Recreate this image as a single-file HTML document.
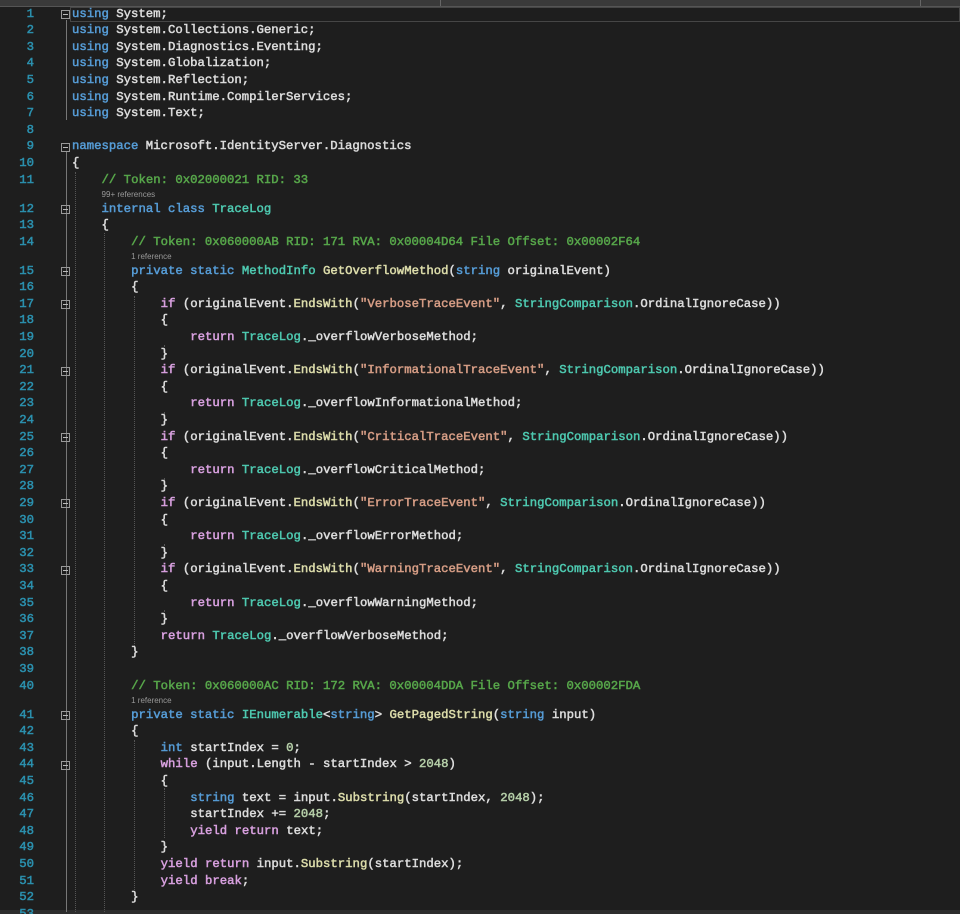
<!DOCTYPE html>
<html><head><meta charset="utf-8"><style>
html,body{margin:0;padding:0;background:#1e1e1e;width:960px;height:914px;overflow:hidden;position:relative}
.l{position:absolute;left:0;height:17px;line-height:17px;white-space:pre;font-family:"Liberation Mono",monospace;font-size:12.3px;color:#dcdcdc;-webkit-text-stroke:0.5px}
.n{position:absolute;width:34px;text-align:right;color:#2b91af;left:0}
.x{position:absolute}
.k{color:#569cd6}.c{color:#d8a0df}.t{color:#4ec9b0}.m{color:#dcdcaa}.s{color:#d69d85}.g{color:#57a64a}.u{color:#b5cea8}
.lens{position:absolute;font-family:"Liberation Sans",sans-serif;font-size:8px;color:#999;height:10px;line-height:10px}
.fold{position:absolute;left:61px;width:7px;height:7px;border:1px solid #999;box-sizing:content-box}
.fold:after{content:"";position:absolute;left:1px;right:1px;top:3px;height:1px;background:#bbb}
.vg{position:absolute;width:0;border-left:1px dotted #555}
</style></head><body>
<div style="position:absolute;left:0;top:0;width:960px;height:6px;background:#3a3a3a;border-bottom:1px solid #555"></div>
<div style="position:absolute;left:440px;top:0;width:1px;height:6px;background:#666"></div>
<div style="position:absolute;left:920px;top:0;width:1px;height:6px;background:#666"></div>
<div style="position:absolute;left:70px;top:7px;width:888px;height:13px;border:1px solid #464646"></div>
<div style="position:absolute;left:0;top:910px;width:960px;height:4px;background:#2d2d2d"></div>
<div style="position:absolute;left:66px;top:20px;width:1px;height:100px;background:#777"></div>
<div style="position:absolute;left:66px;top:152px;width:1px;height:760px;background:#777"></div>
<div class="vg" style="left:75px;top:172px;height:740px"></div>
<div class="vg" style="left:104px;top:233px;height:679px"></div>
<div class="vg" style="left:134px;top:296px;height:350px"></div>
<div class="vg" style="left:134px;top:740px;height:150px"></div>
<div class="vg" style="left:164px;top:345px;height:10px"></div>
<div class="vg" style="left:164px;top:412px;height:10px"></div>
<div class="vg" style="left:164px;top:478px;height:10px"></div>
<div class="vg" style="left:164px;top:544px;height:10px"></div>
<div class="vg" style="left:164px;top:610px;height:10px"></div>
<div class="vg" style="left:164px;top:788px;height:50px"></div>
<div id="c"></div>
<script>
var L=[
[0,"<span class=k>using</span> System;",1],
[0,"<span class=k>using</span> System.Collections.Generic;"],
[0,"<span class=k>using</span> System.Diagnostics.Eventing;"],
[0,"<span class=k>using</span> System.Globalization;"],
[0,"<span class=k>using</span> System.Reflection;"],
[0,"<span class=k>using</span> System.Runtime.CompilerServices;"],
[0,"<span class=k>using</span> System.Text;"],
[0,""],
[0,"<span class=k>namespace</span> Microsoft.IdentityServer.Diagnostics",1],
[0,"{"],
[1,"<span class=g>// Token: 0x02000021 RID: 33</span>"],
[1,"<span class=k>internal</span> <span class=k>class</span> <span class=t>TraceLog</span>",1,"99+ references"],
[1,"{"],
[2,"<span class=g>// Token: 0x060000AB RID: 171 RVA: 0x00004D64 File Offset: 0x00002F64</span>"],
[2,"<span class=k>private</span> <span class=k>static</span> <span class=t>MethodInfo</span> <span class=m>GetOverflowMethod</span>(<span class=k>string</span> originalEvent)",1,"1 reference"],
[2,"{"]
];
var ev=["Verbose","Informational","Critical","Error","Warning"];
ev.forEach(function(e){
L.push([3,"<span class=c>if</span> (originalEvent.<span class=m>EndsWith</span>(<span class=s>\""+e+"TraceEvent\"</span>, <span class=t>StringComparison</span>.OrdinalIgnoreCase))",1]);
L.push([3,"{"]);
L.push([4,"<span class=c>return</span> <span class=t>TraceLog</span>._overflow"+e+"Method;"]);
L.push([3,"}"]);
});
L=L.concat([
[3,"<span class=c>return</span> <span class=t>TraceLog</span>._overflowVerboseMethod;"],
[2,"}"],
[0,""],
[2,"<span class=g>// Token: 0x060000AC RID: 172 RVA: 0x00004DDA File Offset: 0x00002FDA</span>"],
[2,"<span class=k>private</span> <span class=k>static</span> <span class=t>IEnumerable</span>&lt;<span class=k>string</span>&gt; <span class=m>GetPagedString</span>(<span class=k>string</span> input)",1,"1 reference"],
[2,"{"],
[3,"<span class=k>int</span> startIndex = <span class=u>0</span>;"],
[3,"<span class=c>while</span> (input.Length - startIndex &gt; <span class=u>2048</span>)",1],
[3,"{"],
[4,"<span class=k>string</span> text = input.<span class=m>Substring</span>(startIndex, <span class=u>2048</span>);"],
[4,"startIndex += <span class=u>2048</span>;"],
[4,"<span class=c>yield</span> <span class=c>return</span> text;"],
[3,"}"],
[3,"<span class=c>yield</span> <span class=c>return</span> input.<span class=m>Substring</span>(startIndex);"],
[3,"<span class=c>yield</span> <span class=c>break</span>;"],
[2,"}"],
[0,""]
]);
var h="",W=7.39;
L.forEach(function(a,i){
var n=i+1,y;
if(n<=11)y=14+(n-1)*16.6;else if(n<=14)y=209+(n-12)*16.6;else if(n<=40)y=271+(n-15)*16.6;else y=715+(n-41)*16.6;
var top=y-8.5,x=72+a[0]*4*W;
h+='<div class=l style="top:'+top+'px;width:960px"><span class=n>'+n+'</span><span class=x style="left:'+x+'px">'+a[1]+'</span></div>';
if(a[2])h+='<div class=fold style="top:'+(y-4)+'px"></div>';
if(a[3])h+='<div class=lens style="top:'+(y-19)+'px;left:'+x+'px">'+a[3]+'</div>';
});
document.getElementById("c").innerHTML=h;
</script>
</body></html>
